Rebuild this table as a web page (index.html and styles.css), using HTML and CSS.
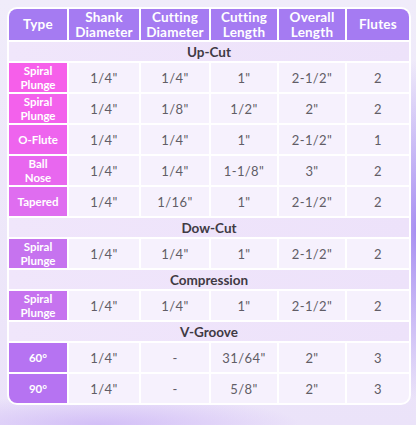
FILE: index.html
```html
<!DOCTYPE html>
<html lang="en">
<head>
<meta charset="utf-8">
<title>Router Bit Specifications</title>
<link rel="stylesheet" href="styles.css">
</head>
<body>
<div class="card">
  <div class="grid">
    <div class="hd">Type</div>
    <div class="hd">Shank<br>Diameter</div>
    <div class="hd">Cutting<br>Diameter</div>
    <div class="hd">Cutting<br>Length</div>
    <div class="hd">Overall<br>Length</div>
    <div class="hd">Flutes</div>

    <div class="sec">Up-Cut</div>

    <div class="ty t1">Spiral<br>Plunge</div>
    <div class="c">1/4"</div><div class="c">1/4"</div><div class="c">1"</div><div class="c">2-1/2"</div><div class="c">2</div>

    <div class="ty t2">Spiral<br>Plunge</div>
    <div class="c">1/4"</div><div class="c">1/8"</div><div class="c">1/2"</div><div class="c">2"</div><div class="c">2</div>

    <div class="ty t3">O-Flute</div>
    <div class="c">1/4"</div><div class="c">1/4"</div><div class="c">1"</div><div class="c">2-1/2"</div><div class="c">1</div>

    <div class="ty t4">Ball<br>Nose</div>
    <div class="c">1/4"</div><div class="c">1/4"</div><div class="c">1-1/8"</div><div class="c">3"</div><div class="c">2</div>

    <div class="ty t5">Tapered</div>
    <div class="c">1/4"</div><div class="c">1/16"</div><div class="c">1"</div><div class="c">2-1/2"</div><div class="c">2</div>

    <div class="sec">Dow-Cut</div>

    <div class="ty t6">Spiral<br>Plunge</div>
    <div class="c">1/4"</div><div class="c">1/4"</div><div class="c">1"</div><div class="c">2-1/2"</div><div class="c">2</div>

    <div class="sec">Compression</div>

    <div class="ty t6">Spiral<br>Plunge</div>
    <div class="c">1/4"</div><div class="c">1/4"</div><div class="c">1"</div><div class="c">2-1/2"</div><div class="c">2</div>

    <div class="sec">V-Groove</div>

    <div class="ty t7">60°</div>
    <div class="c">1/4"</div><div class="c">-</div><div class="c">31/64"</div><div class="c">2"</div><div class="c">3</div>

    <div class="ty t7">90°</div>
    <div class="c">1/4"</div><div class="c">-</div><div class="c">5/8"</div><div class="c">2"</div><div class="c">3</div>
  </div>
</div>
</body>
</html>
```

FILE: styles.css
```css
html, body {
  margin: 0;
  padding: 0;
}
body {
  width: 416px;
  height: 425px;
  padding: 7px 5px 0 7px;
  box-sizing: border-box;
  overflow: hidden;
  font-family: "Lato", "Noto Sans", sans-serif;
  background:
    radial-gradient(ellipse 40px 170px at 416px 230px, rgba(150,120,240,0.8), rgba(150,120,240,0) 100%),
    radial-gradient(ellipse 200px 30px at 100px 425px, rgba(190,160,245,0.55), rgba(190,160,245,0) 100%),
    linear-gradient(180deg, #f0ecfa 0%, #ebe3f9 100%);
}
.card {
  width: 404px;
  border: 2px solid #ffffff;
  border-radius: 10px;
  background: #ffffff;
  overflow: hidden;
  box-sizing: border-box;
}
.grid {
  display: grid;
  grid-template-columns: 58px 70px 68px 66px 66px 1fr;
  grid-template-rows: 31px 19px 29px 29px 29px 29px 29px 19px 29px 19px 29px 19px 29px 29px;
  gap: 2px;
}
.hd {
  background: #a57bf2;
  color: #ffffff;
  font-weight: 700;
  font-size: 13.5px;
  line-height: 15px;
  display: flex;
  align-items: center;
  justify-content: center;
  text-align: center;
  letter-spacing: 0.2px;
}
.sec {
  grid-column: 1 / -1;
  background: linear-gradient(90deg, #f0e6fb, #ede2fa);
  color: #3f3a44;
  font-weight: 700;
  font-size: 13.5px;
  display: flex;
  align-items: center;
  justify-content: center;
}
.ty {
  color: #ffffff;
  font-weight: 700;
  font-size: 11.5px;
  line-height: 14px;
  display: flex;
  align-items: center;
  justify-content: center;
  text-align: center;
}
.t1 { background: #f65fea; }
.t2 { background: #f361ec; }
.t3 { background: #ee64ee; }
.t4 { background: #e867ef; }
.t5 { background: #df6df0; }
.t6 { background: #c673ef; }
.t7 { background: #b673f2; }
.c {
  background: #f6f1fd;
  color: #615d66;
  font-size: 13px;
  font-weight: 400;
  display: flex;
  align-items: center;
  justify-content: center;
  letter-spacing: 0.4px;
}
```
